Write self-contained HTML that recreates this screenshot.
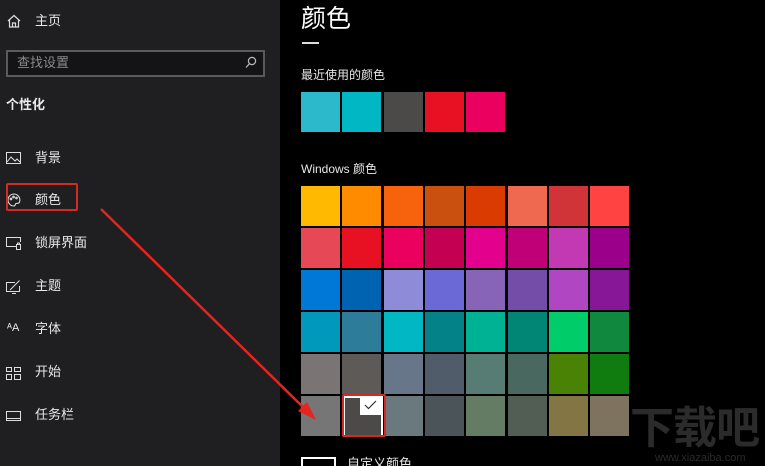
<!DOCTYPE html>
<html><head><meta charset="utf-8"><style>
*{margin:0;padding:0;box-sizing:border-box}
html{width:765px;height:466px;overflow:hidden;background:#000}
body{width:765px;height:466px;overflow:hidden;background:#000;font-family:"Liberation Sans","Noto Sans CJK SC",sans-serif;position:relative;color:#fff}
.side{position:absolute;left:0;top:0;width:280px;height:466px;background:#1f1e20}
.t{position:absolute;font-size:13px;color:#e8e8e8;white-space:nowrap;line-height:1.2}
.sw{position:absolute;width:39px;height:40px}
svg.ic{position:absolute}
</style></head><body>
<div class="side"></div>
<svg class="ic" style="left:7px;top:14px" width="14" height="14" viewBox="0 0 14 14" fill="none" stroke="#ddd" stroke-width="1.2"><path d="M1 7L7 1.5 13 7M2.5 6V13H11.5V6M5.5 13V9H8.5V13"/></svg>
<div class="t" style="left:35px;top:13px">主页</div>
<div style="position:absolute;left:6px;top:50px;width:259px;height:27px;border:2px solid #5a595b;background:#141316"></div>
<div class="t" style="left:17px;top:55px;color:#8a898b">查找设置</div>
<svg class="ic" style="left:245px;top:56px" width="12" height="13" viewBox="0 0 12 13" fill="none" stroke="#bbb" stroke-width="1.2"><circle cx="7" cy="5" r="3.6"/><path d="M4.4 7.8L1 11.5"/></svg>
<div class="t" style="left:6px;top:97px;font-weight:bold;font-size:13px">个性化</div>
<svg class="ic" style="left:6px;top:152px" width="15" height="12" viewBox="0 0 15 12" fill="none" stroke="#ddd" stroke-width="1"><rect x="0.5" y="0.5" width="14" height="11"/><path d="M1 10L5 5 9 9 11 7 14 10"/></svg>
<div class="t" style="left:35px;top:150px">背景</div>
<svg class="ic" style="left:7px;top:193px" width="14" height="14" viewBox="0 0 14 14" fill="none" stroke="#ddd" stroke-width="1.1"><path d="M7 1a6 6 0 1 0 0 12c1.5 0 1-2 2-2.5s3 .5 3.5-1.5A6 6 0 0 0 7 1z"/><circle cx="4" cy="6" r=".8"/><circle cx="6.5" cy="4" r=".8"/><circle cx="9.5" cy="5" r=".8"/></svg>
<div class="t" style="left:35px;top:192px">颜色</div>
<div style="position:absolute;left:6px;top:183px;width:72px;height:28px;border:2px solid #d42a24;border-radius:2px"></div>
<svg class="ic" style="left:6px;top:237px" width="15" height="13" viewBox="0 0 15 13" fill="none" stroke="#ddd" stroke-width="1"><path d="M10 9.5H0.5V0.5H14.5V5"/><rect x="10.5" y="7.5" width="4" height="5"/><path d="M11.5 7.5V6h2v1.5"/></svg>
<div class="t" style="left:35px;top:235px">锁屏界面</div>
<svg class="ic" style="left:6px;top:280px" width="15" height="14" viewBox="0 0 15 14" fill="none" stroke="#ddd" stroke-width="1"><path d="M9 2.5H0.5V11.5H13.5V6"/><path d="M4 10L13.5 0.5M6 13.5h4"/></svg>
<div class="t" style="left:35px;top:278px">主题</div>
<div class="t" style="left:7px;top:322px;font-size:11px">ᴬA</div>
<div class="t" style="left:35px;top:321px">字体</div>
<svg class="ic" style="left:6px;top:367px" width="15" height="13" viewBox="0 0 15 13" fill="none" stroke="#ddd" stroke-width="1"><rect x="0.5" y="0.5" width="5" height="4"/><rect x="8.5" y="0.5" width="6" height="4"/><rect x="0.5" y="7.5" width="5" height="5"/><rect x="8.5" y="7.5" width="6" height="5"/></svg>
<div class="t" style="left:35px;top:364px">开始</div>
<svg class="ic" style="left:6px;top:411px" width="15" height="10" viewBox="0 0 15 10" fill="none" stroke="#ddd" stroke-width="1"><rect x="0.5" y="0.5" width="14" height="9"/><path d="M0.5 7.5h14"/></svg>
<div class="t" style="left:35px;top:407px">任务栏</div>

<div class="t" style="left:301px;top:4px;font-size:25px;color:#fff">颜色</div>
<div style="position:absolute;left:302px;top:42px;width:17px;height:2px;background:#ddd"></div>
<div class="t" style="left:301px;top:68px;font-size:12px">最近使用的颜色</div>
<div class="t" style="left:301px;top:162px;font-size:12px">Windows 颜色</div>
<div id="g"></div>
<div style="position:absolute;left:301px;top:457px;width:35px;height:20px;border:2px solid #fff"></div>
<div class="t" style="left:347px;top:456px">自定义颜色</div>
<div class="t" style="left:630px;top:403px;font-size:44px;color:#2b2b2b;font-weight:bold;letter-spacing:-1px">下载吧</div>
<div class="t" style="left:655px;top:452px;font-size:11px;color:#2b2b2b">www.xiazaiba.com</div>
<svg style="position:absolute;left:0;top:0" width="765" height="466"><line x1="101" y1="209" x2="306" y2="410" stroke="#e8241c" stroke-width="2.5"/><polygon points="316,420 298,411 307,402" fill="#e8241c"/></svg>
<script>
var rec=["#2DB9CC","#00B7C3","#4C4A48","#E81123","#EA005E"];
var rows=[["#FFB900","#FF8C00","#F7630C","#CA5010","#DA3B01","#EF6950","#D13438","#FF4343"],
["#E74856","#E81123","#EA005E","#C30052","#E3008C","#BF0077","#C239B3","#9A0089"],
["#0078D7","#0063B1","#8E8CD8","#6B69D6","#8764B8","#744DA9","#B146C2","#881798"],
["#0099BC","#2D7D9A","#00B7C3","#038387","#00B294","#018574","#00CC6A","#10893E"],
["#7A7574","#5D5A58","#68768A","#515C6B","#567C73","#486860","#498205","#107C10"],
["#767676","#4C4A48","#69797E","#4A5459","#647C64","#525E54","#847545","#7E735F"]];
var h="";
function X(i){return Math.round(301+i*41.3);}
rec.forEach(function(c,i){h+='<div class="sw" style="left:'+X(i)+'px;top:92px;background:'+c+'"></div>';});
rows.forEach(function(r,j){r.forEach(function(c,i){h+='<div class="sw" style="left:'+X(i)+'px;top:'+(186+j*42)+'px;background:'+c+'"></div>';});});
h+='<div style="position:absolute;left:343px;top:396px;width:40px;height:41px;border:2px solid #fff;background:#4C4A48"></div>';
h+='<div style="position:absolute;left:360px;top:397px;width:22px;height:18px;background:#fff"></div>';
h+='<svg style="position:absolute;left:364px;top:400px" width="13" height="10"><path d="M1 5l3.5 3.5L12 1" fill="none" stroke="#333" stroke-width="1.2"/></svg>';
h+='<div style="position:absolute;left:342px;top:394px;width:44px;height:43px;border:2px solid #d42a24;border-radius:2px"></div>';
document.getElementById("g").innerHTML=h;
</script>
</body></html>
